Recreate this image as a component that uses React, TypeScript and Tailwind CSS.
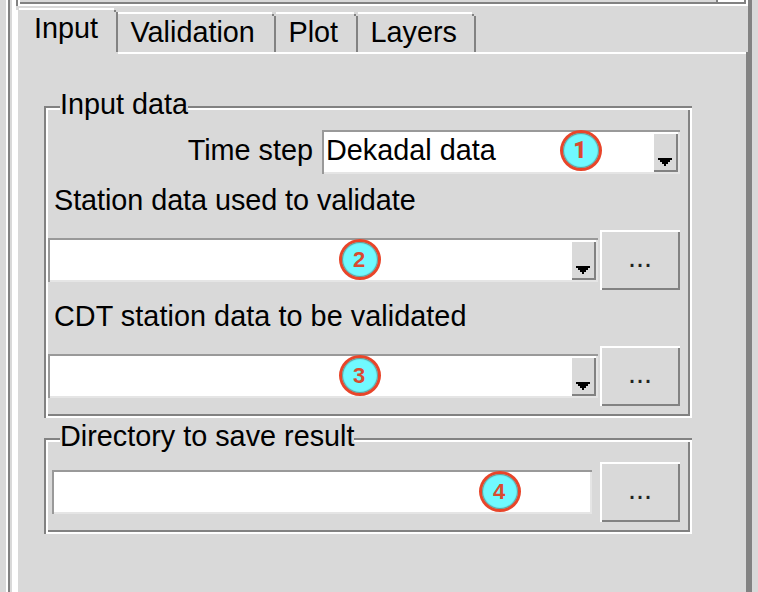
import type { ReactNode } from "react";

const groove =
  "shadow-[inset_2px_0_#828282,inset_0_2px_#828282,inset_-2px_0_#fff,inset_0_-2px_#fff,inset_4px_0_#fff,inset_0_4px_#fff,inset_-4px_0_#828282,inset_0_-4px_#828282]";
const raised =
  "shadow-[inset_2px_0_#fff,inset_0_2px_#fff,inset_-2px_0_#828282,inset_0_-2px_#828282]";
const sunken =
  "shadow-[inset_2px_0_#999,inset_0_2px_#999,inset_-2px_0_#e5e5e5,inset_0_-2px_#e5e5e5]";

function Badge({ n, place }: { n: number; place: string }) {
  const face =
    n === 1
      ? "font-[Roboto,sans-serif] text-[23px] font-black"
      : "font-['Liberation_Sans',Arial,sans-serif] text-[22px] font-bold";
  return (
    <span
      className={`absolute flex h-[41px] w-[42px] items-center justify-center rounded-[50%] border-3 border-[#e8452a] bg-[#70f9ff] pr-[2px] leading-none text-[#d94a30] shadow-[inset_0_0_1px_1px_#5a9c98] ${face} ${place}`}
    >
      {n}
    </span>
  );
}

function Combo({ value, className, children }: { value?: string; className: string; children?: ReactNode }) {
  return (
    <div className={`relative flex h-[44px] justify-between bg-white p-[2px] ${sunken} ${className}`}>
      <span className="pl-[2px] leading-[36px]">{value}</span>
      <span className={`flex h-[40px] w-[26px] justify-center bg-[#d9d9d9] pt-[26px] ${raised}`}>
        <svg width="14" height="8" viewBox="0 0 14 8" shapeRendering="crispEdges">
          <path d="M0 0H14V2H12V4H10V6H8V8H6V6H4V4H2V2H0Z" />
        </svg>
      </span>
      {children}
    </div>
  );
}

function Browse() {
  return (
    <button className={`h-[60px] w-[80px] bg-[#d9d9d9] pb-[5px] text-center text-[#222] ${raised}`}>...</button>
  );
}

function Group({ title, className, children }: { title: string; className: string; children: ReactNode }) {
  return (
    <section className={`relative w-[648px] ${groove} ${className}`}>
      <h2 className="absolute top-[-19px] left-[16px] h-[34px] bg-[#d9d9d9] leading-[34px] whitespace-nowrap">
        {title}
      </h2>
      {children}
    </section>
  );
}

function Tab({ label, className }: { label: string; className: string }) {
  return (
    <div className={`flex h-[40px] ${className}`}>
      <span className="h-[40px] grow border-t-2 border-white pl-[12.5px] leading-[36px]">{label}</span>
      <span className="mt-[2px] h-[2px] w-[2px] bg-[#828282]" />
      <span className="mt-[4px] w-[2px] bg-[#828282]" />
    </div>
  );
}

export default function App() {
  return (
    <div className="flex h-[592px] w-[758px] overflow-hidden bg-[#d9d9d9] font-['Liberation_Sans',Arial,sans-serif] text-[28.8px] text-black">
      <div className="ml-[6px] w-[2px] bg-white" />
      <div className="w-[2px] bg-[#828282]" />
      <div className="ml-[2px] w-[4px] bg-white" />
      <div className="flex w-[2px] flex-col">
        <div className="h-[6px] bg-[#828282]" />
        <div className="mt-[4px] grow bg-white" />
      </div>
      <main className="flex w-[730px] flex-col">
        <div className="flex h-[6px] border-b-2 border-l-2 border-white">
          <div className="flex h-[4px] w-[726px] border-b-2 border-[#828282]">
            <div className="ml-[696px] w-[2px] bg-[#828282]" />
            <div className="w-[26px] bg-white" />
            <div className="w-[2px] bg-[#828282]" />
          </div>
          <div className="w-[2px] bg-white" />
        </div>
        <nav className="flex h-[46px] pt-[2px]">
          <div className="flex h-[44px] w-[100px]">
            <span className="ml-[1px] h-[44px] w-[95px] border-t-2 border-white pl-[15px] leading-[36px]">Input</span>
            <span className="mt-[2px] h-[2px] w-[2px] bg-[#828282]" />
            <span className="mt-[4px] w-[2px] bg-[#828282]" />
          </div>
          <Tab label="Validation" className="mt-[4px] w-[158px]" />
          <Tab label="Plot" className="mt-[4px] w-[82px]" />
          <Tab label="Layers" className="mt-[4px] w-[118px]" />
        </nav>
        <div className="flex h-[540px]">
          <div className="h-[540px] w-[728px] pl-[26px]">
            <div className="-ml-[26px] flex pl-[100px]">
              <div className="h-[2px] grow bg-white" />
            </div>
            <Group title="Input data" className="mt-[52px] h-[312px]">
              <div className="flex pt-[24px]">
                <span className="w-[278px] pr-[9px] text-right leading-[41px]">Time step</span>
                <Combo value="Dekadal data" className="w-[358px]">
                  <Badge n={1} place="left-[238px] top-0" />
                </Combo>
              </div>
              <p className="mt-[9px] pl-[10px] leading-[34px] tracking-[-0.06px]">Station data used to validate</p>
              <div className="mt-[13px] flex pl-[4px]">
                <Combo className="mt-[8px] mr-[2px] w-[550px]">
                  <Badge n={2} place="left-[291px] top-[1px]" />
                </Combo>
                <Browse />
              </div>
              <p className="mt-[9px] pl-[10px] leading-[34px] tracking-[0.05px]">CDT station data to be validated</p>
              <div className="mt-[13px] flex pl-[4px]">
                <Combo className="mt-[8px] mr-[2px] w-[550px]">
                  <Badge n={3} place="left-[291px] top-[1px]" />
                </Combo>
                <Browse />
              </div>
            </Group>
            <Group title="Directory to save result" className="mt-[20px] h-[96px]">
              <div className="flex pt-[24px] pl-[8px]">
                <div className={`relative mt-[8px] mr-[8px] h-[44px] w-[540px] bg-white ${sunken}`}>
                  <Badge n={4} place="left-[427px] top-[1px]" />
                </div>
                <Browse />
              </div>
            </Group>
          </div>
          <div className="w-[2px] bg-[#828282]" />
        </div>
      </main>
      <div className="w-[4px] bg-[#828282]" />
    </div>
  );
}
